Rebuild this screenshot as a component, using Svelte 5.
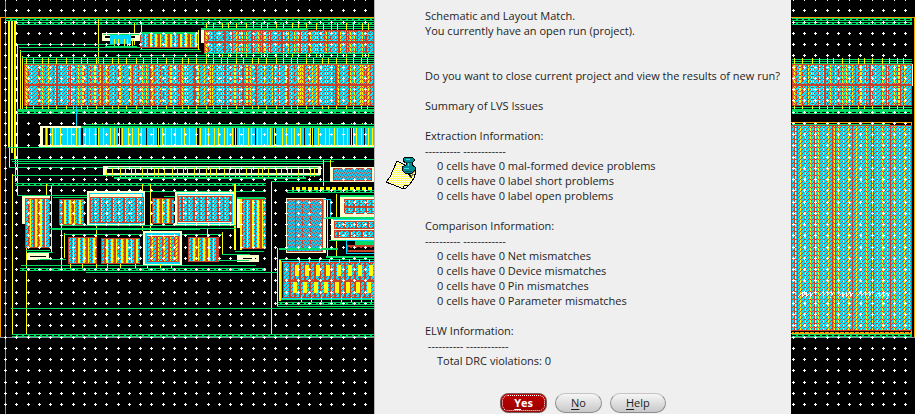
<script>
  const G = '#00dc64', Y = '#ffff00', C = '#00d8ff', R = '#c8402a', W = '#ffffcc', K = '#000000', O = '#ffa500', S = '#8c8ca0';

  const shapes = [];
  const box = (fill, x, y, w, h) => shapes.push({ fill, x, y, w, h });
  const hl = (fill, y, x1, x2, h = 1) => box(fill, x1, y, x2 - x1, h);
  const vl = (fill, x, y1, y2, w = 1) => box(fill, x, y1, w, y2 - y1);

  // fixed stripe sequence, so that each cell repeats the same irregular rhythm
  const rhythm = [4, 6, 3, 5, 7, 4, 5, 3, 6];
  function stripes(fill, x1, x2, y1, y2, extra = 0, seed = 0) {
    let x = x1 + 2;
    for (let i = seed; x < x2 - 1; i++) {
      vl(fill, x, y1, y2);
      x += rhythm[i % rhythm.length] + extra;
    }
  }
  function frame(fill, x, y, w, h) {
    hl(fill, y, x, x + w);
    hl(fill, y + h - 1, x, x + w);
    vl(fill, x, y, y + h);
    vl(fill, x + w - 1, y, y + h);
  }
  function cell(x, y, w, h, gap = 5, seed = 0) {
    box('url(#hatch)', x, y, w, h);
    const step = gap < 5 ? 5 : 6;
    for (let i = seed, p = x + 3; p < x + w - 2; i++, p += step) {
      vl(R, p, y, y + h, i % 2 ? 2 : 1);
      if (p + 3 < x + w - 1) vl(gap < 5 ? Y : 'url(#yellowDash)', p + 2, y, y + h, gap < 5 && i % 3 ? 2 : 1);
    }
    frame(R, x, y, w, h);
  }
  function rail(x1, x2, y) {
    hl(G, y, x1, x2, 3);
    hl('url(#railDash)', y + 1, x1, x2);
  }
  function bigRow(x1, x2, y1, mid, y2, seed, step) {
    box('url(#hatch)', x1, y1, x2 - x1, y2 - y1);
    stripes('url(#yellowDash)', x1, x2, y1, y2, 1, seed);
    stripes('url(#redLong)', x1 + 2, x2, y1, y2, 3, seed + 4);
    stripes('url(#yellowDash)', x1 + 5, x2, y1, y2, 8, seed + 2);
    for (let i = 0, x = x1 + step; x < x2; i++, x += step + (i % 2 ? 2 : -1)) vl(R, x, y1, y2, i % 3 === 1 ? 2 : 1);
    hl(R, mid, x1, x2, 2);
    frame(R, x1, y1, x2 - x1, y2 - y1);
  }
  function bus(x1, x2, ys, seed = 0) {
    ys.forEach((y) => hl(G, y, x1, x2));
    stripes(Y, x1, x2, ys[0] - 1, ys[ys.length - 1] + 2, 3, seed);
  }

  // outer frame and power rails
  hl(O, 17, 0, 915);
  vl(O, 0, 17, 337);
  vl(O, 914, 17, 337);
  rail(6, 374, 18);
  rail(17, 374, 22);
  rail(792, 912, 18);
  rail(792, 912, 22);
  [8, 11, 14].forEach((x, i) => vl(Y, x, 21, 147 + i * 6, 2));
  vl(Y, 9, 147, 167);
  vl(Y, 15, 147, 182);
  vl(Y, 17, 45, 195);
  vl(Y, 20, 50, 112);
  vl(Y, 22, 56, 112);
  vl(Y, 98, 19, 64);
  vl(Y, 134, 23, 45);
  vl(Y, 141, 23, 50);

  // small driver in the first row
  box(W, 102, 33, 40, 8);
  box(K, 105, 36, 5, 2);
  box(K, 131, 36, 4, 2);
  box(C, 110, 35, 21, 9);
  stripes(Y, 112, 140, 39, 46, 0);
  hl(G, 34, 103, 139);
  hl(G, 46, 105, 137, 2);
  hl(G, 44, 17, 115);
  hl(G, 47, 19, 140);
  hl(G, 51, 20, 201);
  hl(G, 55, 116, 374);
  cell(140, 33, 58, 15, 3);
  hl(G, 32, 140, 198, 2);
  hl(G, 49, 140, 200);
  hl(G, 51, 140, 196);
  vl(Y, 198, 30, 50);
  box(W, 201, 28, 3, 15);

  // first wide array
  bus(204, 374, [24, 26, 28]);
  hl(G, 28, 201, 308, 2);
  bigRow(204, 374, 30, 41, 54, 1, 9);
  stripes(Y, 204, 374, 54, 58, 3);
  hl(G, 57, 22, 374);
  hl(G, 53, 204, 374);

  // second wide array, both sides of the window
  for (const [a, b, s] of [[24, 374, 0], [792, 912, 3]]) {
    bus(a, b, [59, 61, 63], s);
    bigRow(a, b, 64, 84, 106, s, 15);
    bus(a, b, [107], s);
    hl(G, 109, a - (s ? 0 : 7), b, 2);
    rail(a - (s ? 0 : 7), b, 111);
    hl('url(#railDash)', 112, a, b);
  }
  vl(W, 912, 64, 86);

  // capacitor row
  vl(C, 76, 106, 127);
  box(W, 40, 126, 334, 21);
  box(C, 44, 128, 330, 17);
  stripes(Y, 44, 374, 128, 146, 0, 1);
  [[43, 2], [48, 2], [81, 2], [97, 1], [118, 3], [146, 1], [157, 3], [197, 2], [234, 3], [255, 1], [273, 3], [304, 1], [311, 3], [350, 3], [364, 1]].forEach(([x, w]) => {
    vl(K, x, 128, 145, w);
    if (w > 2) vl(Y, x + 1, 128, 147);
  });
  hl(G, 124, 85, 374);
  hl(G, 126, 81, 374, 2);
  stripes(Y, 90, 374, 123, 124, 6);
  hl(G, 147, 8, 374);
  hl(G, 159, 11, 374);
  hl(G, 161, 12, 334);
  hl(G, 163, 14, 324);
  hl(G, 167, 9, 103);

  // resistor strip
  box(W, 103, 166, 218, 9);
  hl(G, 167, 108, 318);
  box(K, 106, 169, 212, 4);
  stripes(Y, 104, 320, 168, 177, 1, 3);
  hl(G, 175, 12, 320);
  hl(G, 177, 114, 306, 2);
  rail(15, 266, 183);
  hl(G, 191, 145, 266);
  vl(Y, 12, 174, 335);
  vl(Y, 26, 247, 335);
  vl(Y, 46, 184, 196);
  vl(Y, 51, 185, 252);
  vl(Y, 142, 184, 231);
  vl(Y, 150, 184, 236);
  vl(Y, 61, 224, 268);
  vl(Y, 64, 233, 258);
  vl(Y, 96, 224, 237);
  vl(Y, 271, 181, 335);
  vl(Y, 323, 160, 186);
  vl(Y, 330, 160, 180);
  hl(G, 181, 271, 374);

  // matched pairs
  hl(G, 195, 17, 88);
  box(W, 22, 196, 3, 28);
  box(W, 47, 196, 3, 28);
  hl(W, 196, 22, 50, 2);
  cell(25, 198, 25, 50, 4);
  cell(59, 199, 25, 26, 4, 1);
  hl(G, 197, 53, 88);
  box(W, 87, 191, 58, 34);
  frame(C, 89, 193, 54, 31);
  cell(90, 197, 54, 26, 6);
  cell(152, 198, 22, 26, 4, 2);
  hl(G, 196, 164, 176);
  box(W, 175, 192, 60, 33);
  frame(C, 177, 194, 56, 30);
  cell(178, 196, 54, 26, 6, 1);
  vl(Y, 234, 184, 250, 2);
  box(W, 237, 198, 29, 30);
  vl(Y, 240, 199, 250, 2);
  cell(242, 199, 24, 50, 4);
  hl(G, 197, 237, 265, 2);
  hl(G, 225, 60, 236);
  hl(G, 228, 50, 236);
  hl(G, 229, 51, 200);
  hl(G, 234, 64, 222);
  vl(Y, 207, 229, 238);
  vl(Y, 222, 232, 254);
  cell(68, 237, 29, 27, 4);
  cell(101, 238, 39, 26, 4, 1);
  box(W, 143, 231, 39, 35);
  frame(C, 145, 233, 35, 31);
  frame(C, 146, 234, 33, 29);
  cell(147, 236, 32, 26, 5);
  cell(188, 237, 31, 25, 4, 2);
  hl(G, 250, 26, 50);
  hl(G, 252, 28, 53);
  box(W, 27, 253, 22, 7);
  hl(K, 256, 30, 46);
  hl(G, 259, 38, 66);
  hl(G, 254, 222, 250);
  box(W, 237, 255, 22, 7);
  hl(K, 258, 243, 256);
  hl(G, 260, 218, 249);
  hl(G, 251, 235, 264);
  hl(G, 265, 21, 256);
  stripes(Y, 68, 182, 264, 269, 8);
  rail(20, 266, 268);
  hl(G, 272, 86, 278);

  // analog macro on the right of the left pane
  box(W, 330, 167, 44, 15);
  box('url(#dense)', 333, 168, 39, 13);
  frame(R, 333, 168, 39, 13);
  hl(Y, 187, 292, 374, 3);
  hl('url(#gapDash)', 187, 292, 374, 3);
  rail(287, 374, 190);
  box(W, 286, 198, 40, 55);
  box('url(#dense)', 287, 199, 36, 53);
  vl(R, 295, 199, 252);
  [302, 310].forEach((x) => vl('url(#redLong)', x, 199, 252));
  frame(R, 287, 199, 36, 53);
  frame(C, 323, 199, 8, 20);
  vl(Y, 327, 200, 256);
  vl(Y, 336, 194, 256);
  hl(G, 195, 340, 374, 2);
  box(W, 340, 197, 34, 20);
  cell(344, 199, 32, 15, 5);
  hl(R, 206, 344, 374, 2);
  hl(G, 217, 326, 374, 2);
  box(W, 331, 219, 43, 21);
  hl(C, 219, 333, 374);
  cell(334, 221, 42, 8, 5);
  cell(334, 230, 42, 8, 5, 1);
  hl(G, 240, 329, 374);
  frame(C, 346, 240, 30, 14);
  box(G, 355, 241, 19, 4);
  box('url(#redDash)', 347, 246, 28, 6);
  frame(R, 347, 245, 29, 7);
  hl(G, 248, 279, 338, 2);
  hl(G, 256, 326, 374, 2);
  vl(Y, 277, 248, 306);
  vl(Y, 279, 259, 301, 2);

  // switch array
  hl(G, 259, 279, 374);
  frame(C, 281, 261, 96, 38);
  box('url(#hatch)', 283, 263, 91, 35);
  for (let x = 289; x < 374; x += 5) vl(R, x, 263, 298, 2);
  frame(R, 283, 262, 94, 36);
  hl(R, 280, 283, 374, 2);
  for (let i = 0; i < 8; i++) {
    box(Y, 295 + Math.floor(i * 10.6), 265, 4, 11);
    box(Y, 293 + Math.floor(i * 10.6), 282, 4, 11);
    vl(Y, 299 + i * 10, 259, 263);
    vl(Y, 301 + i * 10, 297, 302);
  }
  hl(G, 299, 281, 374);
  rail(278, 374, 302);
  hl(G, 306, 277, 374);
  hl(G, 308, 11, 374);
  rail(12, 374, 334);

  // output device on the far side
  frame(O, 790, 122, 122, 212);
  box('url(#hatch)', 792, 126, 119, 205);
  [800, 805, 810, 818, 823, 828, 838, 843, 848, 856, 861, 866, 877, 882, 887, 894, 899, 904, 909].forEach((x) =>
    vl('url(#yellowDash)', x, 126, 331)
  );
  [794, 797, 814, 832, 835, 852, 871, 873, 890].forEach((x) => vl(R, x, 126, 331));
  [795, 815, 834, 872].forEach((x) => vl('url(#yellowDash)', x, 126, 331));
  frame(R, 791, 125, 121, 206);
  hl(G, 124, 792, 890);
  hl('url(#orangeDash)', 331, 792, 912, 2);
  rail(792, 912, 334);

  // rulers
  hl(S, 337, 0, 915);
  vl(S, 5, 0, 414);

  const scribbles = [798, 819, 838, 857, 875];

  let grid = '';
  for (let r = -1; r < 37; r++) {
    const y = Math.round(10.3 + 11.25 * r);
    for (let c = 0; c < 82; c++) {
      const x = Math.round(5 + 11.255 * c);
      grid += `M${x - 1} ${y}h3v1h-3zM${x} ${y - 1}h1v3h-1z`;
    }
  }

  const sections = [
    {
      title: 'Extraction Information:',
      rule: '---------- ------------',
      rows: ['0 cells have 0 mal-formed device problems', '0 cells have 0 label short problems', '0 cells have 0 label open problems']
    },
    {
      title: 'Comparison Information:',
      rule: '---------- ------------',
      rows: ['0 cells have 0 Net mismatches', '0 cells have 0 Device mismatches', '0 cells have 0 Pin mismatches', '0 cells have 0 Parameter mismatches']
    },
    { title: 'ELW Information:', rule: ' ---------- ------------', rows: ['Total DRC violations: 0'] }
  ];
</script>

<main>
  <svg class="chip" width="915" height="414" viewBox="0 0 915 414" shape-rendering="crispEdges" aria-hidden="true">
    <defs>
      <pattern id="hatch" width="4" height="4" patternUnits="userSpaceOnUse">
        <rect width="4" height="4" fill="#00e4ff" />
        <path d="M0 3h1v1h-1zM1 2h1v1h-1zM2 1h1v1h-1zM3 0h1v1h-1z" fill="#c8402a" />
      </pattern>
      <pattern id="dense" width="4" height="4" patternUnits="userSpaceOnUse">
        <rect width="4" height="4" fill="#1cc4ec" />
        <path d="M0 0h1v1h-1zM2 1h1v1h-1zM1 2h1v1h-1zM3 3h1v1h-1z" fill="#c8402a" />
      </pattern>
      <pattern id="yellowDash" width="1" height="4" patternUnits="userSpaceOnUse">
        <rect width="1" height="3" fill="#ffff00" />
        <rect y="3" width="1" height="1" fill="#c8402a" />
      </pattern>
      <pattern id="redLong" width="1" height="6" patternUnits="userSpaceOnUse"><rect width="1" height="4" fill="#c8402a" /></pattern>
      <pattern id="redDash" width="5" height="5" patternUnits="userSpaceOnUse"><path d="M0 0h5v2h-3v1h-2z" fill="#c8402a" /></pattern>
      <pattern id="railDash" width="6" height="1" patternUnits="userSpaceOnUse"><rect width="4" height="1" fill="#000" /></pattern>
      <pattern id="gapDash" width="6" height="3" patternUnits="userSpaceOnUse"><rect width="2" height="3" fill="#000" /></pattern>
      <pattern id="orangeDash" width="5" height="2" patternUnits="userSpaceOnUse"><rect width="4" height="1" fill="#ffa500" /></pattern>
    </defs>
    <rect width="915" height="414" fill="#000" />
    {#each shapes as s}
      <rect x={s.x} y={s.y} width={s.w} height={s.h} fill={s.fill} />
    {/each}
    {#each scribbles as x, i}
      <path d="M{x} {297 - (i % 2)}l4 -4l0 4l4 -4l0 4l4 -4l0 4l3 -4" fill="none" stroke="#fff" stroke-width="1" />
    {/each}
    <path d={grid} fill="#fff" />
  </svg>

  <div class="pane left"></div>
  <div class="dialog" role="dialog" aria-label="Schematic and Layout Match">
    <div class="content">
      <svg class="note" width="34" height="36" viewBox="0 0 34 36" aria-hidden="true">
        <defs>
          <pattern id="paper" width="2" height="2" patternUnits="userSpaceOnUse">
            <rect width="2" height="2" fill="#ffff50" />
            <path d="M0 0h1v1h-1zM1 1h1v1h-1z" fill="#ffffff" />
          </pattern>
        </defs>
        <g shape-rendering="crispEdges">
          <path d="M12 5L31 15L29 22L25 28L21 32L18 33L14 31L6 28L1 26L5 21L8 14Z" fill="url(#paper)" stroke="#000" />
          <path d="M18 33L19 30L24 29" fill="#fff" stroke="#000" />
          <path d="M25 19l5 -4M24 21l5 -3M25 22l3 -3" stroke="#80803c" />
          <path d="M22 16l5 6" stroke="#000" />
          <path d="M20 1h7l2 2v2l-2 2v2l3 2v3l-3 3h-7l-3 -3v-3l4 -2v-2l-3 -2v-2z" fill="#008c94" stroke="#000" />
          <path d="M21 3h4M19 12h5M23 7v3" stroke="#4fd8dc" />
          <path d="M20 6h7M20 15h7" stroke="#00545c" />
        </g>
      </svg>
      <div class="message">
        <p>Schematic and Layout Match.<br />You currently have an open run (project).</p>
        <p class="question">Do you want to close current project and view the results of new run?</p>
        <p>Summary of LVS Issues</p>
        {#each sections as s}
          <section>
            <h2>{s.title}</h2>
            <div class="rule">{s.rule}</div>
            <ul>
              {#each s.rows as row}<li>{row}</li>{/each}
            </ul>
          </section>
        {/each}
      </div>
    </div>
    <div class="actions">
      <button class="primary"><span><u>Y</u>es</span></button>
      <button><u>N</u>o</button>
      <button><u>H</u>elp</button>
    </div>
  </div>
  <div class="pane right"></div>
</main>

<style>
  :global(body) {
    background: #000;
  }
  main {
    position: relative;
    display: flex;
    min-height: 100vh;
    overflow: hidden;
    font: 11px/15px 'Open Sans', 'Noto Sans', sans-serif;
    color: #1e1e1e;
  }
  .chip {
    position: absolute;
    top: 0;
    left: 0;
  }
  .left {
    flex: 374;
  }
  .right {
    flex: 124;
  }
  .dialog {
    position: relative;
    box-sizing: border-box;
    width: 417px;
    padding: 8px 10px 1px 10px;
    background: #efefef;
    border-left: 1px solid #b8b8b8;
    display: flex;
    flex-direction: column;
    justify-content: space-between;
  }
  .content {
    display: flex;
    align-items: flex-start;
    gap: 6px;
  }
  .note {
    flex: none;
    margin-top: 148px;
  }
  .message {
    display: flex;
    flex-direction: column;
    gap: 15px;
    white-space: nowrap;
  }
  p,
  h2,
  ul {
    margin: 0;
    padding: 0;
    font: inherit;
    list-style: none;
  }
  .question {
    padding-top: 15px;
  }
  .rule {
    white-space: pre;
  }
  ul {
    padding-left: 12px;
  }
  .actions {
    display: flex;
    justify-content: center;
    gap: 8px;
  }
  button {
    box-sizing: border-box;
    height: 20px;
    padding: 0 15px;
    border: 1px solid #8e8e8e;
    border-top-color: #c4c4c4;
    border-radius: 10px;
    background: linear-gradient(#f6f6f6, #c8c8c8);
    font: inherit;
    line-height: 16px;
    color: #1e1e1e;
  }
  u {
    text-underline-offset: 2px;
  }
  .primary {
    padding: 0 1px;
    border-color: #7a5a5a;
    border-radius: 8px;
    background: linear-gradient(#c00000, #980000);
    color: #fff;
    font-weight: 700;
  }
  .primary span {
    display: block;
    padding: 0 11px;
    border: 1px dotted #fff;
    border-radius: 6px;
    line-height: 14px;
  }
</style>
